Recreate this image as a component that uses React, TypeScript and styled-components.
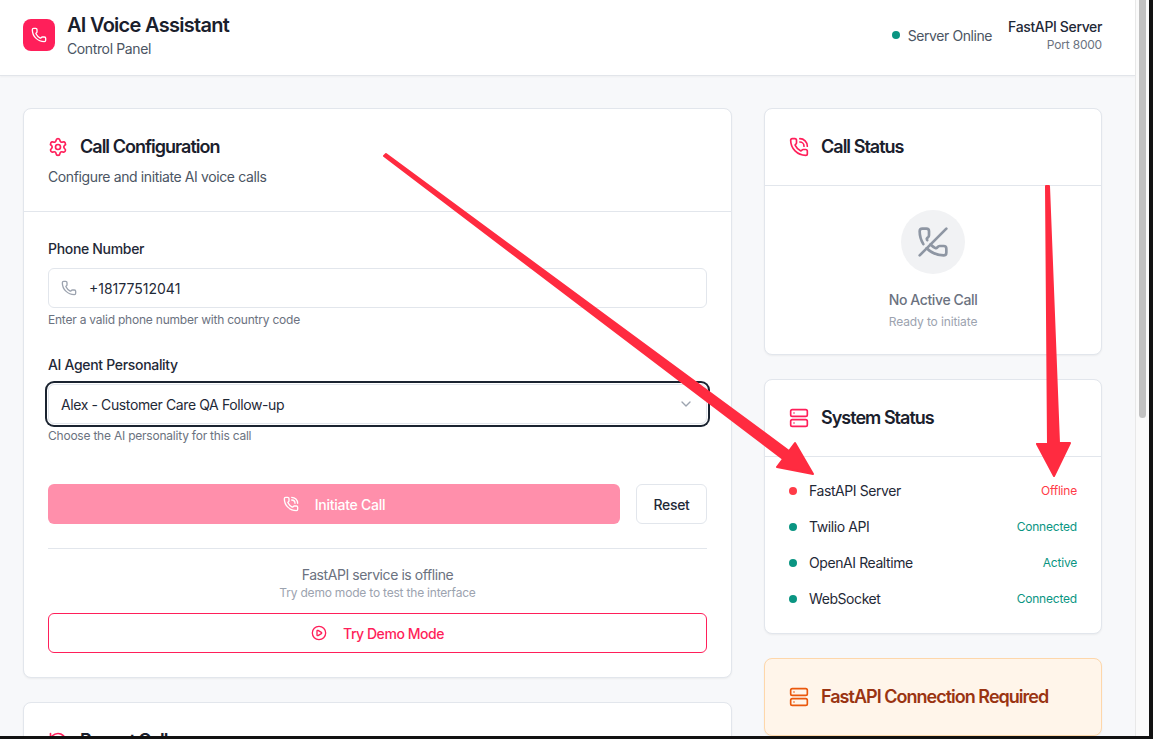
import React from 'react';
import styled, { createGlobalStyle } from 'styled-components';
import {
  ChevronDown,
  CirclePlay,
  History,
  Phone,
  PhoneCall,
  PhoneOff,
  Server,
  Settings,
} from 'lucide-react';

const GlobalStyle = createGlobalStyle`
  * {
    box-sizing: border-box;
  }

  html,
  body {
    margin: 0;
    height: 100%;
    overflow: hidden;
  }

  body {
    color: #1f2937;
    font-family: Inter, "Noto Sans", sans-serif;
    -webkit-font-smoothing: antialiased;
  }
`;

const Shell = styled.div`
  display: flex;
  flex-direction: column;
  height: 739px;
  overflow: hidden;
  position: relative;
  width: 1153px;
`;

const Window = styled.div`
  display: flex;
  flex: 1;
  min-height: 0;
`;

const BottomEdge = styled.div`
  background: #111111;
  flex: none;
  height: 3px;
`;

const RightEdge = styled.div`
  background: #111111;
  flex: none;
  width: 4px;
`;

const Scrollbar = styled.div`
  background: #fafafa;
  border-left: 1px solid #e8e8e8;
  flex: none;
  padding: 0 3px 0 3px;
  width: 14px;
`;

const Thumb = styled.div`
  background: #c1c1c1;
  border-radius: 0 0 4px 4px;
  height: 418px;
`;

const Page = styled.div`
  background: #f7f8fa;
  flex: 1;
  min-width: 0;
  overflow: hidden;
`;

const Header = styled.header`
  align-items: center;
  background: #ffffff;
  border-bottom: 1px solid #e2e5ea;
  box-shadow: 0 1px 2px rgba(0, 0, 0, 0.04);
  display: flex;
  height: 76px;
  justify-content: space-between;
  padding: 0 33px 5px 23px;
`;

const Brand = styled.div`
  align-items: center;
  display: flex;
  gap: 12px;
`;

const Logo = styled.div`
  align-items: center;
  background: #ff1f5a;
  border-radius: 8px;
  color: #ffffff;
  display: flex;
  height: 32px;
  justify-content: center;
  width: 32px;
`;

const BrandText = styled.div`
  display: flex;
  flex-direction: column;
`;

const AppTitle = styled.h1`
  color: #1a202c;
  font-size: 20px;
  font-weight: 600;
  letter-spacing: -0.72px;
  line-height: 28px;
  margin: 0;
`;

const AppSubtitle = styled.p`
  color: #4b5563;
  font-size: 14px;
  letter-spacing: -0.38px;
  line-height: 20px;
  margin: 0;
`;

const HeaderRight = styled.div`
  align-items: center;
  display: flex;
  gap: 16px;
`;

const ServerState = styled.div`
  align-items: center;
  color: #4b5563;
  display: flex;
  font-size: 14px;
  gap: 8px;
  letter-spacing: -0.42px;
`;

const Dot = styled.span<{ $offline?: boolean }>`
  background: ${(props) => (props.$offline ? '#ff3b47' : '#0a9582')};
  border-radius: 50%;
  display: block;
  flex: none;
  height: 8px;
  width: 8px;
`;

const ServerInfo = styled.div`
  text-align: right;
`;

const ServerName = styled.div`
  color: #1f2937;
  font-size: 14px;
  font-weight: 500;
  letter-spacing: -0.36px;
  line-height: 20px;
`;

const ServerPort = styled.div`
  color: #6b7280;
  font-size: 12px;
  letter-spacing: -0.2px;
  line-height: 16px;
`;

const Content = styled.main`
  display: grid;
  gap: 32px;
  grid-template-columns: 709px 338px;
  padding: 32px 23px;
`;

const Column = styled.div`
  display: flex;
  flex-direction: column;
  gap: 24px;
`;

const Card = styled.section<{ $warning?: boolean }>`
  background: ${(props) => (props.$warning ? '#fff5ea' : '#ffffff')};
  border: 1px solid ${(props) => (props.$warning ? '#fed7aa' : '#e2e6ec')};
  border-radius: 8px;
  box-shadow: 0 1px 2px rgba(0, 0, 0, 0.05);
`;

const CardHeader = styled.div<{ $flat?: boolean }>`
  border-bottom: ${(props) => (props.$flat ? 'none' : '1px solid #e2e6ec')};
  padding: 24px;
`;

const TitleRow = styled.div`
  align-items: center;
  display: flex;
  gap: 12px;
  height: 28px;
`;

const IconSlot = styled.span<{ $color?: string }>`
  color: ${(props) => props.$color || '#ff1f5a'};
  display: flex;
  flex: none;
`;

const CardTitle = styled.h2<{ $warning?: boolean }>`
  color: ${(props) => (props.$warning ? '#9a3412' : '#1a202c')};
  font-size: 18px;
  font-weight: 600;
  letter-spacing: -0.98px;
  line-height: 28px;
  margin: 0;
`;

const CardDescription = styled.p`
  color: #4b5563;
  font-size: 14px;
  letter-spacing: -0.38px;
  line-height: 20px;
  margin: 6px 0 0;
`;

const FormBody = styled.div`
  display: flex;
  flex-direction: column;
  padding: 27px 24px 24px;
`;

const Field = styled.div`
  display: flex;
  flex-direction: column;
  margin-bottom: 27px;
`;

const Label = styled.label`
  color: #1f2937;
  font-size: 14px;
  font-weight: 500;
  letter-spacing: -0.32px;
  line-height: 20px;
  margin-bottom: 9px;
`;

const InputBox = styled.div`
  align-items: center;
  background: #ffffff;
  border: 1px solid #e2e6ec;
  border-radius: 6px;
  color: #1f2937;
  display: flex;
  font-size: 14px;
  gap: 12px;
  height: 40px;
  padding: 0 12px;
`;

const SelectBox = styled(InputBox)`
  box-shadow: 0 0 0 1px #ffffff, 0 0 0 3px #1a2330;
  justify-content: space-between;
  letter-spacing: -0.39px;
`;

const Helper = styled.p`
  color: #6b7280;
  font-size: 12px;
  letter-spacing: -0.22px;
  line-height: 16px;
  margin: 4px 0 0;
`;

const Actions = styled.div`
  display: flex;
  gap: 16px;
  margin-top: 13px;
`;

const PrimaryButton = styled.button`
  align-items: center;
  background: #ff8fab;
  border: none;
  border-radius: 6px;
  color: #ffffff;
  display: flex;
  flex: 1;
  font: 500 14px Inter, sans-serif;
  gap: 16px;
  height: 40px;
  justify-content: center;
  letter-spacing: -0.25px;
`;

const ResetButton = styled.button`
  background: #ffffff;
  border: 1px solid #e2e6ec;
  border-radius: 6px;
  color: #1f2937;
  font: 500 14px Inter, sans-serif;
  height: 40px;
  letter-spacing: -0.35px;
  width: 71px;
`;

const OfflineBlock = styled.div`
  border-top: 1px solid #e2e6ec;
  display: flex;
  flex-direction: column;
  margin-top: 24px;
  padding-top: 16px;
`;

const OfflineText = styled.p`
  color: #6b7280;
  font-size: 14px;
  letter-spacing: -0.42px;
  line-height: 20px;
  margin: 0;
  text-align: center;
`;

const OfflineHint = styled.p`
  color: #9ca3af;
  font-size: 12px;
  letter-spacing: -0.2px;
  line-height: 16px;
  margin: 0 0 12px;
  text-align: center;
`;

const DemoButton = styled.button`
  align-items: center;
  background: #ffffff;
  border: 1px solid #ff1f5a;
  border-radius: 6px;
  color: #ff1f5a;
  display: flex;
  font: 500 14px Inter, sans-serif;
  gap: 16px;
  height: 40px;
  justify-content: center;
  letter-spacing: -0.45px;
`;

const EmptyCall = styled.div`
  align-items: center;
  display: flex;
  flex-direction: column;
  padding: 24px;
`;

const EmptyCircle = styled.div`
  align-items: center;
  background: #f1f2f4;
  border-radius: 50%;
  color: #8e96a3;
  display: flex;
  height: 64px;
  justify-content: center;
  margin-bottom: 16px;
  width: 64px;
`;

const EmptyTitle = styled.p`
  color: #6b7280;
  font-size: 14px;
  font-weight: 500;
  letter-spacing: -0.38px;
  line-height: 20px;
  margin: 0 0 4px;
`;

const EmptyHint = styled.p`
  color: #9ca3af;
  font-size: 12px;
  letter-spacing: -0.12px;
  line-height: 16px;
  margin: 0;
`;

const StatusList = styled.div`
  display: flex;
  flex-direction: column;
  padding: 16px 24px 16px;
`;

const StatusRow = styled.div`
  align-items: center;
  display: flex;
  height: 36px;
  justify-content: space-between;
`;

const StatusName = styled.div`
  align-items: center;
  color: #1f2937;
  display: flex;
  font-size: 14px;
  gap: 12px;
  letter-spacing: -0.42px;
  padding-bottom: 1px;
`;

const StatusValue = styled.span<{ $offline?: boolean }>`
  color: ${(props) => (props.$offline ? '#ff3b47' : '#0a9582')};
  font-size: 12px;
  letter-spacing: -0.2px;
  padding-bottom: 1px;
`;

const ArrowLayer = styled.svg`
  height: 739px;
  left: 0;
  pointer-events: none;
  position: absolute;
  top: 0;
  width: 1153px;
`;

const statusRows = [
  { name: 'FastAPI Server', value: 'Offline', offline: true },
  { name: 'Twilio API', value: 'Connected', offline: false },
  { name: 'OpenAI Realtime', value: 'Active', offline: false },
  { name: 'WebSocket', value: 'Connected', offline: false },
];

const App = () => {
  return (
    <Shell>
      <GlobalStyle />
      <Window>
        <Page>
          <Header>
            <Brand>
              <Logo>
                <Phone size={16} strokeWidth={2} />
              </Logo>
              <BrandText>
                <AppTitle>AI Voice Assistant</AppTitle>
                <AppSubtitle>Control Panel</AppSubtitle>
              </BrandText>
            </Brand>
            <HeaderRight>
              <ServerState>
                <Dot />
                Server Online
              </ServerState>
              <ServerInfo>
                <ServerName>FastAPI Server</ServerName>
                <ServerPort>Port 8000</ServerPort>
              </ServerInfo>
            </HeaderRight>
          </Header>
          <Content>
            <Column>
              <Card>
                <CardHeader>
                  <TitleRow>
                    <IconSlot>
                      <Settings size={20} strokeWidth={2} />
                    </IconSlot>
                    <CardTitle>Call Configuration</CardTitle>
                  </TitleRow>
                  <CardDescription>Configure and initiate AI voice calls</CardDescription>
                </CardHeader>
                <FormBody>
                  <Field>
                    <Label>Phone Number</Label>
                    <InputBox>
                      <IconSlot $color="#9ca3af">
                        <Phone size={16} strokeWidth={2} />
                      </IconSlot>
                      +18177512041
                    </InputBox>
                    <Helper>Enter a valid phone number with country code</Helper>
                  </Field>
                  <Field>
                    <Label>AI Agent Personality</Label>
                    <SelectBox>
                      Alex - Customer Care QA Follow-up
                      <IconSlot $color="#9ca3af">
                        <ChevronDown size={16} strokeWidth={2} />
                      </IconSlot>
                    </SelectBox>
                    <Helper>Choose the AI personality for this call</Helper>
                  </Field>
                  <Actions>
                    <PrimaryButton>
                      <PhoneCall size={16} strokeWidth={2} />
                      Initiate Call
                    </PrimaryButton>
                    <ResetButton>Reset</ResetButton>
                  </Actions>
                  <OfflineBlock>
                    <OfflineText>FastAPI service is offline</OfflineText>
                    <OfflineHint>Try demo mode to test the interface</OfflineHint>
                    <DemoButton>
                      <CirclePlay size={16} strokeWidth={2} />
                      Try Demo Mode
                    </DemoButton>
                  </OfflineBlock>
                </FormBody>
              </Card>
              <Card>
                <CardHeader $flat>
                  <TitleRow>
                    <IconSlot>
                      <History size={20} strokeWidth={2} />
                    </IconSlot>
                    <CardTitle>Recent Calls</CardTitle>
                  </TitleRow>
                </CardHeader>
              </Card>
            </Column>
            <Column>
              <Card>
                <CardHeader>
                  <TitleRow>
                    <IconSlot>
                      <PhoneCall size={20} strokeWidth={2} />
                    </IconSlot>
                    <CardTitle>Call Status</CardTitle>
                  </TitleRow>
                </CardHeader>
                <EmptyCall>
                  <EmptyCircle>
                    <PhoneOff size={32} strokeWidth={2} />
                  </EmptyCircle>
                  <EmptyTitle>No Active Call</EmptyTitle>
                  <EmptyHint>Ready to initiate</EmptyHint>
                </EmptyCall>
              </Card>
              <Card>
                <CardHeader>
                  <TitleRow>
                    <IconSlot>
                      <Server size={20} strokeWidth={2} />
                    </IconSlot>
                    <CardTitle>System Status</CardTitle>
                  </TitleRow>
                </CardHeader>
                <StatusList>
                  {statusRows.map((row) => (
                    <StatusRow key={row.name}>
                      <StatusName>
                        <Dot $offline={row.offline} />
                        {row.name}
                      </StatusName>
                      <StatusValue $offline={row.offline}>{row.value}</StatusValue>
                    </StatusRow>
                  ))}
                </StatusList>
              </Card>
              <Card $warning>
                <CardHeader $flat>
                  <TitleRow>
                    <IconSlot $color="#ea580c">
                      <Server size={20} strokeWidth={2} />
                    </IconSlot>
                    <CardTitle $warning>FastAPI Connection Required</CardTitle>
                  </TitleRow>
                </CardHeader>
              </Card>
            </Column>
          </Content>
        </Page>
        <Scrollbar>
          <Thumb />
        </Scrollbar>
        <RightEdge />
      </Window>
      <BottomEdge />
      {/* annotation arrows drawn over the screenshot */}
      <ArrowLayer viewBox="0 0 1153 739">
        <g fill="#ff2b40" stroke="#ff2b40" strokeWidth={2} strokeLinejoin="round">
          <polygon points="384,156 783,459 777,467 813,474 795,443 789,451 386,154" />
          <polygon points="1046,186 1049,186 1059,443 1070,443 1054,476 1037,444 1048,444" />
        </g>
      </ArrowLayer>
    </Shell>
  );
};

export default App;
